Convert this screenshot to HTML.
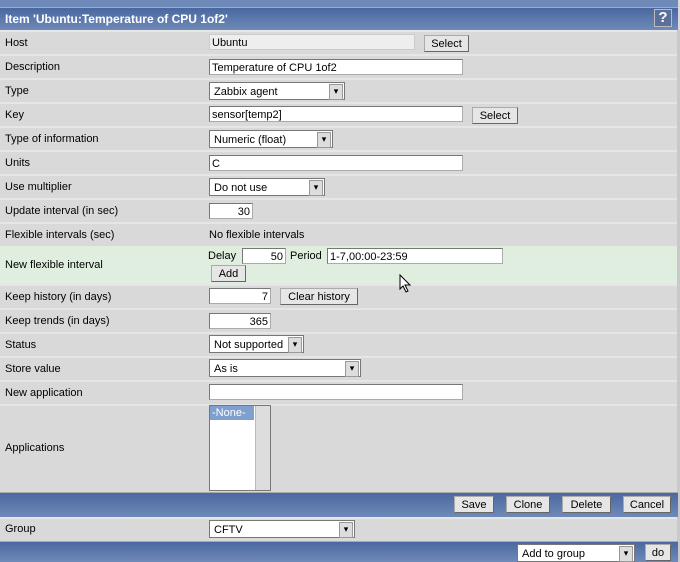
<!DOCTYPE html>
<html><head><meta charset="utf-8"><style>
*{margin:0;padding:0;box-sizing:border-box}
body{width:680px;height:562px;overflow:hidden;background:#d9d9d9;font-family:"Liberation Sans",sans-serif;font-size:11px;color:#000;position:relative}
.a{position:absolute}
.bar{position:absolute;left:0;width:678px;background:linear-gradient(#4a68a0,#6f8ab8)}
.row{position:absolute;left:0;width:677px;background:linear-gradient(#e6e6e6 0,#e6e6e6 2px,#d9d9d9 2px)}
.lab{position:absolute;left:5px}
.in{position:absolute;height:16px;background:#fff;border:1px solid #777;border-right-color:#aaa;border-bottom-color:#aaa;padding:1px 2px 0;line-height:14px;font-size:11px;white-space:nowrap}
.r{text-align:right}
.sel{position:absolute;height:18px;background:#fff;border:1px solid #777;padding:1px 4px 0;line-height:16px;white-space:nowrap}
.sel:after{content:"▾";position:absolute;right:1px;top:1px;width:12px;height:14px;background:#ddd;border:1px solid #999;font-size:9px;line-height:13px;text-align:center}
.btn{position:absolute;height:17px;background:#e6e6e6;border:1px solid #666;border-top-color:#aaa;border-left-color:#aaa;line-height:16px;text-align:center;font-size:11px}
</style></head><body>
<div class="bar" style="top:0;height:7px;background:#6f8ab8"></div>
<div class="bar" style="top:7px;height:23px;border-top:1px solid #aaa"></div>
<div class="a" style="left:5px;top:12px;color:#fff;font-weight:bold;font-size:12px">Item 'Ubuntu:Temperature of CPU 1of2'</div>
<div class="a" style="left:654px;top:9px;width:18px;height:18px;border:1px solid #bbb;background:#5a6f9a;color:#fff;font-weight:bold;font-size:15px;line-height:16px;text-align:center">?</div>
<div class="a" style="left:677px;top:30px;width:3px;height:532px;background:#c9c9c9"></div>

<div class="row" style="top:30px;height:24px"><span class="lab" style="top:7px">Host</span>
<div class="in" style="left:209px;top:4px;width:206px;background:#eee;border-color:#ccc">Ubuntu</div>
<div class="btn" style="left:424px;top:5px;width:45px">Select</div></div>
<div class="row" style="top:54px;height:24px"><span class="lab" style="top:7px">Description</span>
<div class="in" style="left:209px;top:5px;width:254px">Temperature of CPU 1of2</div></div>
<div class="row" style="top:78px;height:24px"><span class="lab" style="top:7px">Type</span>
<div class="sel" style="left:209px;top:4px;width:136px">Zabbix agent</div></div>
<div class="row" style="top:102px;height:24px"><span class="lab" style="top:7px">Key</span>
<div class="in" style="left:209px;top:4px;width:254px">sensor[temp2]</div>
<div class="btn" style="left:472px;top:5px;width:46px">Select</div></div>
<div class="row" style="top:126px;height:24px"><span class="lab" style="top:7px">Type of information</span>
<div class="sel" style="left:209px;top:4px;width:124px">Numeric (float)</div></div>
<div class="row" style="top:150px;height:24px"><span class="lab" style="top:7px">Units</span>
<div class="in" style="left:209px;top:5px;width:254px">C</div></div>
<div class="row" style="top:174px;height:24px"><span class="lab" style="top:7px">Use multiplier</span>
<div class="sel" style="left:209px;top:4px;width:116px">Do not use</div></div>
<div class="row" style="top:198px;height:24px"><span class="lab" style="top:7px">Update interval (in sec)</span>
<div class="in r" style="left:209px;top:5px;width:44px">30</div></div>
<div class="row" style="top:222px;height:24px"><span class="lab" style="top:7px">Flexible intervals (sec)</span>
<span class="a" style="left:209px;top:7px">No flexible intervals</span></div>
<div class="row" style="top:246px;height:38px;background:#dfeede"><span class="lab" style="top:13px">New flexible interval</span>
<span class="a" style="left:208px;top:4px">Delay</span>
<div class="in r" style="left:242px;top:2px;width:44px">50</div>
<span class="a" style="left:290px;top:4px">Period</span>
<div class="in" style="left:327px;top:2px;width:176px">1-7,00:00-23:59</div>
<div class="btn" style="left:211px;top:19px;width:35px">Add</div></div>
<div class="row" style="top:284px;height:24px"><span class="lab" style="top:7px">Keep history (in days)</span>
<div class="in r" style="left:209px;top:4px;width:62px">7</div>
<div class="btn" style="left:280px;top:4px;width:78px">Clear history</div></div>
<div class="row" style="top:308px;height:24px"><span class="lab" style="top:7px">Keep trends (in days)</span>
<div class="in r" style="left:209px;top:5px;width:62px">365</div></div>
<div class="row" style="top:332px;height:24px"><span class="lab" style="top:7px">Status</span>
<div class="sel" style="left:209px;top:3px;width:95px">Not supported</div></div>
<div class="row" style="top:356px;height:24px"><span class="lab" style="top:7px">Store value</span>
<div class="sel" style="left:209px;top:3px;width:152px">As is</div></div>
<div class="row" style="top:380px;height:24px"><span class="lab" style="top:7px">New application</span>
<div class="in" style="left:209px;top:4px;width:254px"></div></div>
<div class="row" style="top:404px;height:88px"><span class="lab" style="top:38px">Applications</span>
<div class="a" style="left:209px;top:1px;width:62px;height:86px;background:#fff;border:1px solid #777">
<div style="width:44px;height:14px;background:#7f9fcf;color:#fff;line-height:14px;padding-left:2px">-None-</div>
<div class="a" style="right:0;top:0;width:15px;height:84px;background:#ddd;border-left:1px solid #bbb"></div></div></div>
<div class="bar" style="top:492px;height:25px;border-top:1px solid #aaa"></div>
<div class="btn" style="left:454px;top:496px;width:40px">Save</div>
<div class="btn" style="left:506px;top:496px;width:44px">Clone</div>
<div class="btn" style="left:562px;top:496px;width:49px">Delete</div>
<div class="btn" style="left:623px;top:496px;width:48px">Cancel</div>
<div class="row" style="top:517px;height:24px"><span class="lab" style="top:6px">Group</span>
<div class="sel" style="left:209px;top:3px;width:146px">CFTV</div></div>
<div class="bar" style="top:541px;height:21px;border-top:1px solid #aaa"></div>
<div class="sel" style="left:517px;top:544px;width:118px">Add to group</div>
<div class="btn" style="left:645px;top:544px;width:26px">do</div>
<svg class="a" style="left:399px;top:274px;z-index:9" width="14" height="20" viewBox="0 0 14 20"><path d="M1 1 L1 15 L4 12 L7 18 L9 17 L6 11 L11 11 Z" fill="#fff" stroke="#000"/></svg>
</body></html>
